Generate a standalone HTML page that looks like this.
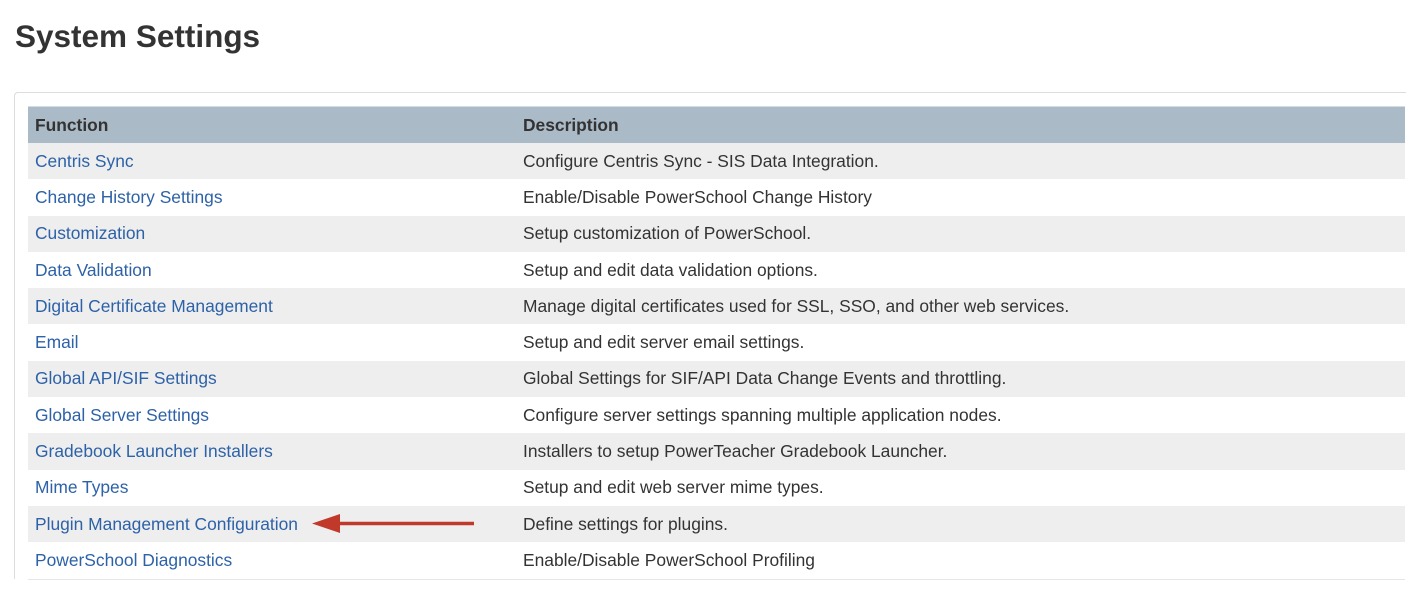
<!DOCTYPE html>
<html><head><style>
body{margin:0;width:1424px;height:594px;background:#fff;font-family:"Liberation Sans",Arial,sans-serif;overflow:hidden;position:relative}
h1{position:absolute;left:15px;top:18px;margin:0;font-size:31.5px;font-weight:bold;color:#333}
.box{position:absolute;left:14px;top:92px;width:1391px;height:486px;border-top:1px solid #ddd;border-left:1px solid #ddd;border-top-left-radius:4px}
table{position:absolute;left:28px;top:106px;width:1377px;border-collapse:collapse;font-size:17.4px}
th{background:#abbac7;color:#333;text-align:left;height:36px;padding:0 0 0 7px;font-weight:bold;border-top:1px solid #d4dde5}
td{height:36.3px;padding:0 0 0 7px;color:#333}
td:first-child{width:481px}
td a{color:#2d62a8;text-decoration:none}
tr:nth-child(odd) td{background:#eee}
tr:last-child td{border-bottom:1px solid #e6e6e6}
</style></head><body>
<h1>System Settings</h1>
<div class="box"></div>
<table>
<thead><tr><th>Function</th><th>Description</th></tr></thead>
<tbody>
<tr><td><a>Centris Sync</a></td><td>Configure Centris Sync - SIS Data Integration.</td></tr>
<tr><td><a>Change History Settings</a></td><td>Enable/Disable PowerSchool Change History</td></tr>
<tr><td><a>Customization</a></td><td>Setup customization of PowerSchool.</td></tr>
<tr><td><a>Data Validation</a></td><td>Setup and edit data validation options.</td></tr>
<tr><td><a>Digital Certificate Management</a></td><td>Manage digital certificates used for SSL, SSO, and other web services.</td></tr>
<tr><td><a>Email</a></td><td>Setup and edit server email settings.</td></tr>
<tr><td><a>Global API/SIF Settings</a></td><td>Global Settings for SIF/API Data Change Events and throttling.</td></tr>
<tr><td><a>Global Server Settings</a></td><td>Configure server settings spanning multiple application nodes.</td></tr>
<tr><td><a>Gradebook Launcher Installers</a></td><td>Installers to setup PowerTeacher Gradebook Launcher.</td></tr>
<tr><td><a>Mime Types</a></td><td>Setup and edit web server mime types.</td></tr>
<tr><td><a>Plugin Management Configuration</a></td><td>Define settings for plugins.</td></tr>
<tr><td><a>PowerSchool Diagnostics</a></td><td>Enable/Disable PowerSchool Profiling</td></tr>
</tbody></table>
<svg style="position:absolute;left:310px;top:512px" width="170" height="24"><line x1="28" y1="11.5" x2="164" y2="11.5" stroke="#c0392b" stroke-width="3.5"/><polygon points="2,11.5 30,2 30,21" fill="#c0392b"/></svg>
</body></html>
